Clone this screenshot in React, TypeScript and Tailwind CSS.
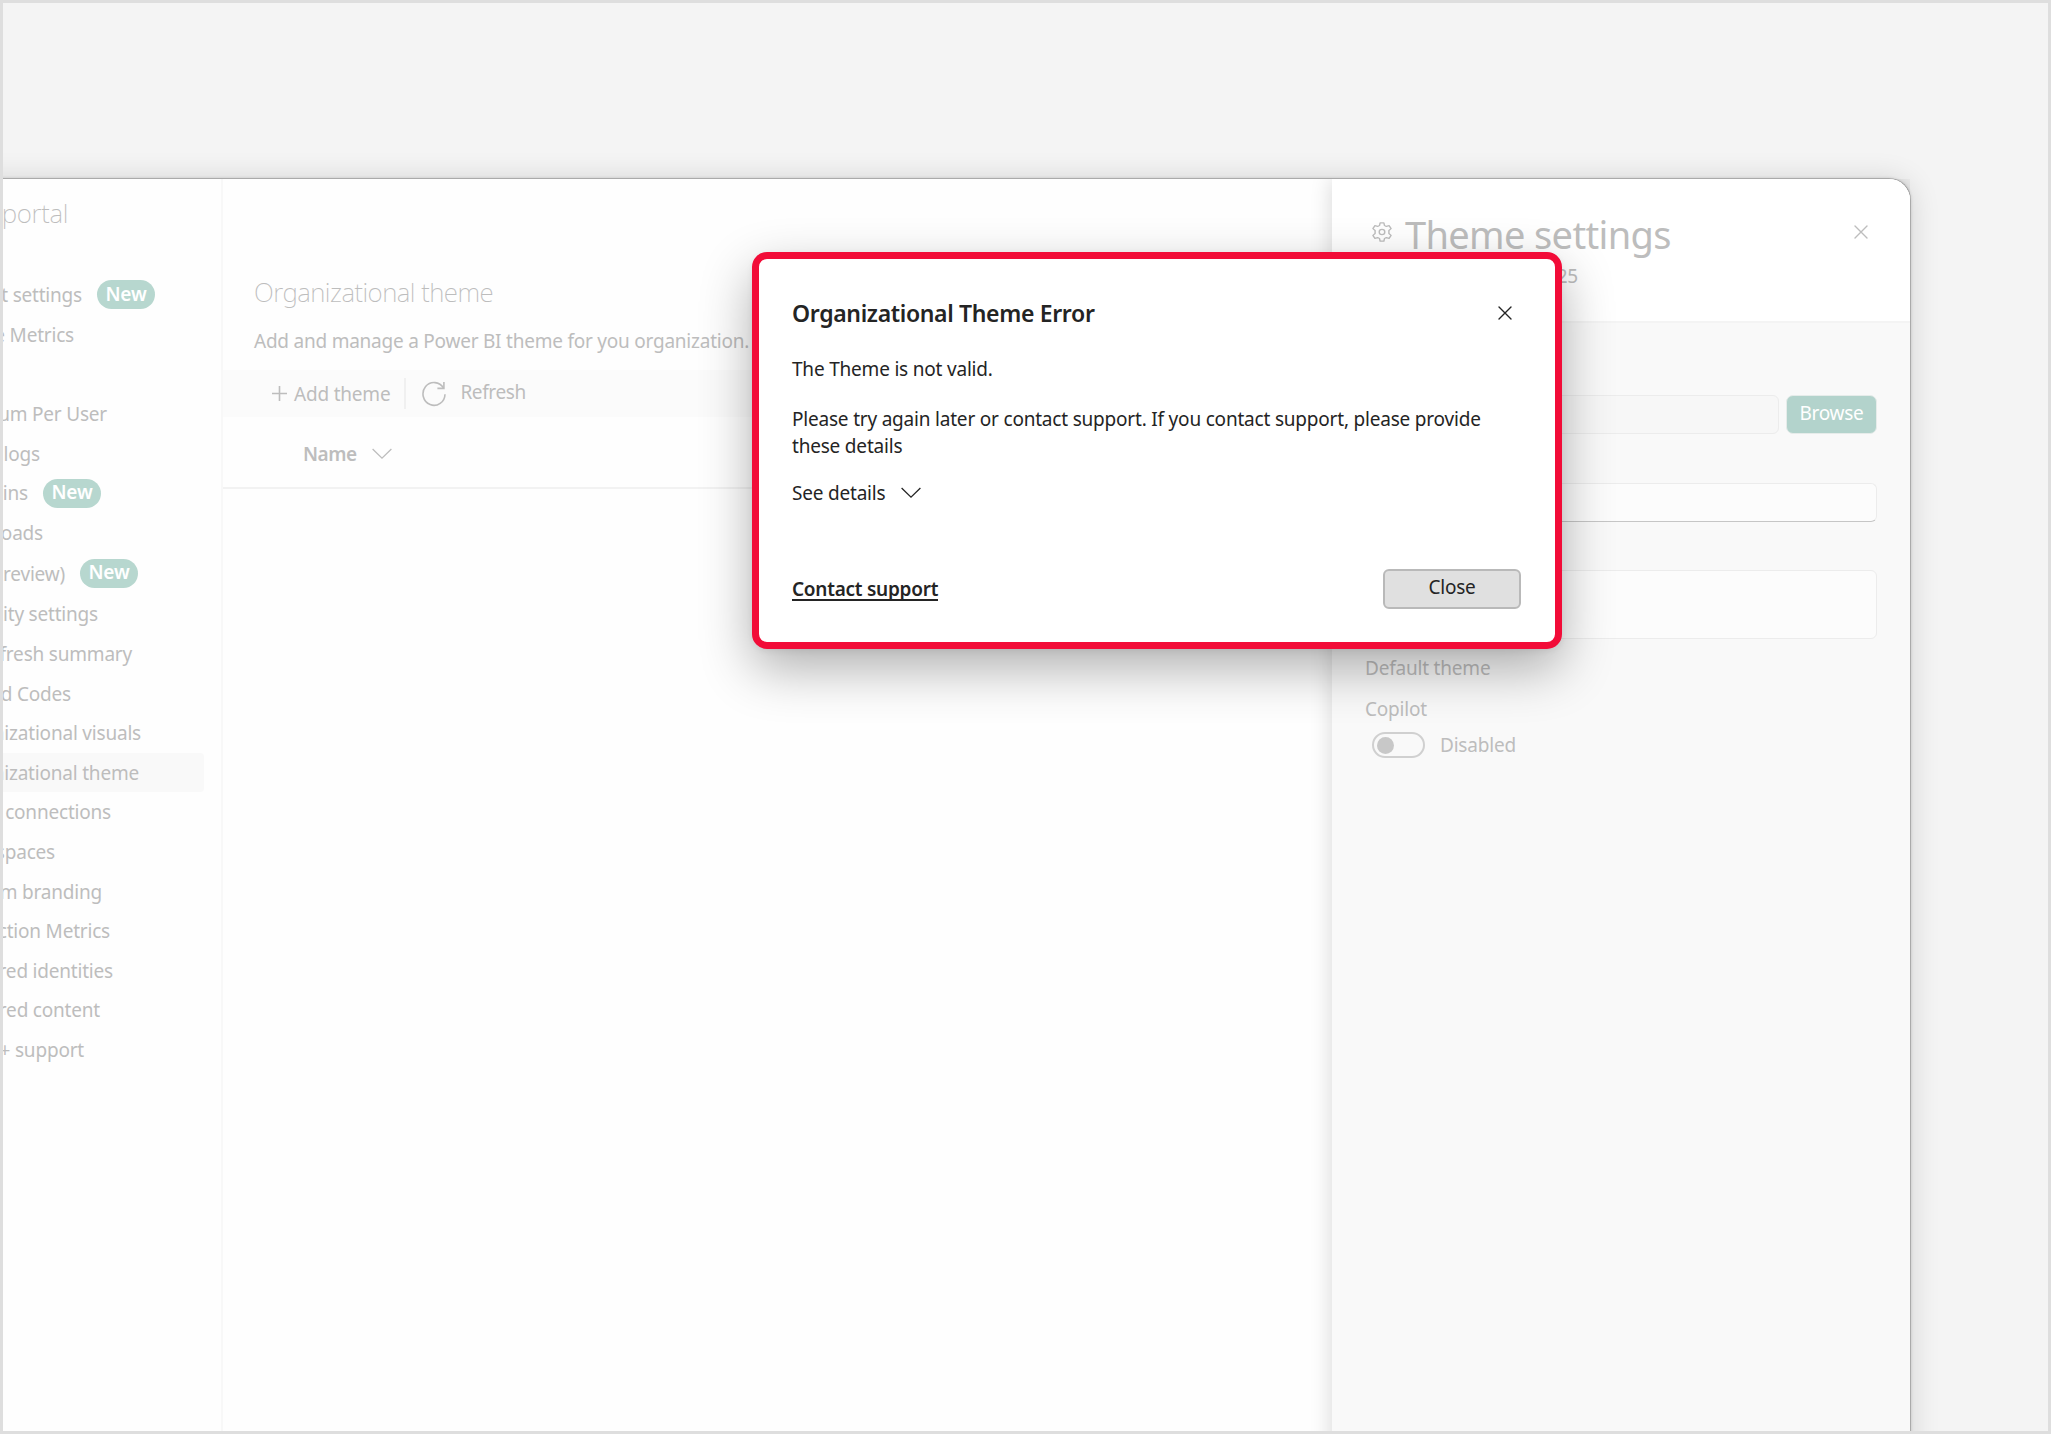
import type { ReactNode } from "react";

type NavItem = {
  label: string;
  end: number;
  isNew?: boolean;
  active?: boolean;
};

const topItems: NavItem[] = [
  { label: "t settings", end: 79, isNew: true },
  { label: "e Metrics", end: 71 },
  { label: "", end: 0 },
  { label: "um Per User", end: 104 },
  { label: "logs", end: 37 },
  { label: "ins", end: 25, isNew: true },
];

const middleItems: NavItem[] = [
  { label: "oads", end: 40 },
  { label: "review)", end: 62, isNew: true },
  { label: "ity settings", end: 95 },
];

const bottomItems: NavItem[] = [
  { label: "fresh summary", end: 129 },
  { label: "d Codes", end: 68 },
  { label: "nizational visuals", end: 138 },
  { label: "nizational theme", end: 136, active: true },
  { label: "connections", end: 108 },
  { label: "spaces", end: 52 },
  { label: "m branding", end: 99 },
  { label: "ction Metrics", end: 107 },
  { label: "red identities", end: 110 },
  { label: "red content", end: 97 },
  { label: "+ support", end: 81 },
];

function NewBadge() {
  return (
    <span className="ml-[15px] flex h-[29px] w-[58px] shrink-0 items-center justify-center rounded-full bg-[#b7d7cf] pb-[2px] text-[19px] font-semibold text-white">
      New
    </span>
  );
}

function NavRow({ item, className }: { item: NavItem; className: string }) {
  return (
    <div className={`flex items-center ${className} ${item.active ? "mr-[17px] rounded-r-sm bg-[#f9f9f9]" : ""}`}>
      <span className="flex shrink-0 justify-end pt-px whitespace-nowrap" style={{ width: item.end }}>
        {item.label}
      </span>
      {item.isNew && <NewBadge />}
    </div>
  );
}

function Chevron({ className }: { className?: string }) {
  return (
    <svg width="20" height="12" viewBox="0 0 20 12" fill="none" stroke="currentColor" strokeWidth="1.3" className={className}>
      <path d="M0.6 1 L10 10.2 L19.4 1" />
    </svg>
  );
}

function Cross({ className }: { className?: string }) {
  return (
    <svg width="14" height="14" viewBox="0 0 14 14" fill="none" stroke="currentColor" strokeWidth="1.4" strokeLinecap="round" className={className}>
      <path d="M1 1 L13 13 M13 1 L1 13" />
    </svg>
  );
}

function Gear({ className }: { className?: string }) {
  return (
    <svg width="20" height="20" viewBox="0 0 20 22" preserveAspectRatio="none" fill="none" stroke="currentColor" strokeWidth="1.4" strokeLinejoin="round" className={className}>
      <path d="M8.1 1 H11.9 L12.5 3.9 L14.3 4.9 L17.1 4 L19.1 7.3 L16.9 9.3 V12.7 L19.1 14.7 L17.1 18 L14.3 17.1 L12.5 18.1 L11.9 21 H8.1 L7.5 18.1 L5.7 17.1 L2.9 18 L0.9 14.7 L3.1 12.7 V9.3 L0.9 7.3 L2.9 4 L5.7 4.9 L7.5 3.9 Z" />
      <circle cx="10" cy="11" r="2.8" />
    </svg>
  );
}

function Sidebar() {
  return (
    <aside className="w-[220px] shrink-0 overflow-hidden border-r-2 border-[#f8f8f8] pt-[14px]">
      <div className="flex h-10 w-[65px] items-center justify-end text-[26px] font-extralight tracking-[-0.3px]">portal</div>
      <nav className="mt-[42px]">
        {topItems.map((item, i) => (
          <NavRow key={i} item={item} className="h-[39.65px]" />
        ))}
        {middleItems.map((item) => (
          <NavRow key={item.label} item={item} className="h-[40.4px]" />
        ))}
        {bottomItems.map((item) => (
          <NavRow key={item.label} item={item} className="h-[39.6px]" />
        ))}
      </nav>
    </aside>
  );
}

function ThemeList() {
  return (
    <main className="min-w-0 flex-1 pt-[93px]">
      <h1 className="pl-[31px] text-[26px] leading-10 font-extralight tracking-[-0.52px]">Organizational theme</h1>
      <p className="mt-[15px] pl-[31px] leading-7 tracking-[-0.23px] whitespace-nowrap">Add and manage a Power BI theme for you organization.</p>
      <div className="mt-[15px] flex h-[47px] items-center bg-[#fbfbfb] pl-[49px]">
        <svg width="15" height="15" viewBox="0 0 15 15" stroke="currentColor" strokeWidth="1.6">
          <path d="M7.5 0 V15 M0 7.5 H15" />
        </svg>
        <span className="ml-[7px] pt-[2px]">Add theme</span>
        <span className="ml-[14px] h-[31px] w-[2px] bg-[#f0f0f0]" />
        <svg width="24" height="26" viewBox="0 0 24 26" fill="none" stroke="currentColor" strokeWidth="1.6" className="ml-[16px]">
          <path d="M21.5 7.2 A11 11.4 0 1 0 23 13.2" />
          <path d="M21.9 1 V7.4 H15.4" />
        </svg>
        <span className="ml-[14px] pb-[2px] tracking-[-0.4px]">Refresh</span>
      </div>
      <div className="flex h-[72px] items-center border-b-2 border-[#f2f2f2] pt-[4px] pl-[80px]">
        <span className="font-semibold tracking-[-0.5px]">Name</span>
        <Chevron className="ml-[15px]" />
      </div>
    </main>
  );
}

function Field({ className, children }: { className: string; children?: ReactNode }) {
  return <div className={`rounded-md border ${className}`}>{children}</div>;
}

function SettingsPanel() {
  return (
    <section className="flex w-[578px] shrink-0 flex-col overflow-hidden rounded-tr-[21px] bg-[#f9f9f9]">
      <header className="h-[144px] border-b-2 border-[#f4f4f4] bg-white pt-[30px] pl-10">
        <div className="flex h-[50px] items-center">
          <Gear className="mb-1" />
          <h2 className="ml-[13px] text-[38px] leading-[50px] font-normal tracking-[-0.64px]">Theme settings</h2>
          <Cross className="mr-[42px] mb-[4px] ml-auto" />
        </div>
        <div className="mt-[3px] flex w-[206px] justify-end leading-7">25</div>
      </header>
      <div className="pt-[72px] pr-[33px] pl-[33px]">
        <div className="flex">
          <Field className="h-[39px] w-[414px] border-[#ececec] bg-[#f7f7f7]" />
          <button className="ml-[7px] h-[39px] w-[91px] rounded-[7px] border border-[#e6ecea] bg-[#b3d3cc] pb-[2px] tracking-[-0.25px] text-white">
            Browse
          </button>
        </div>
        <Field className="mt-[49px] h-[39px] border-[#ececec] border-b-[#c6c6c6] bg-[#fcfcfc]" />
        <Field className="mt-[48px] h-[69px] border-[#ececec] bg-[#fcfcfc]" />
        <div className="mt-[15px] leading-7">Default theme</div>
        <div className="mt-[13px] leading-7">Copilot</div>
        <div className="mt-[9px] flex h-[26px] items-center pl-[7px]">
          <span className="flex h-[26px] w-[53px] items-center rounded-full border-2 border-[#d0d0d0] pl-[3px]">
            <span className="size-[17px] rounded-full bg-[#c8c8c8]" />
          </span>
          <span className="ml-[15px]">Disabled</span>
        </div>
      </div>
    </section>
  );
}

function ErrorDialog() {
  return (
    <div
      role="dialog"
      className="absolute top-[249px] left-[749px] h-[397px] w-[810px] rounded-[15px] border-[7px] border-[#f20c38] bg-white pt-[38px] pr-[34px] pl-[33px] text-[#242424] shadow-[0_2px_6px_rgba(0,0,0,0.06),0_20px_52px_rgba(0,0,0,0.31)]"
    >
      <div className="flex h-8 items-center">
        <h2 className="text-[23px] leading-8 font-semibold tracking-[-0.34px]">Organizational Theme Error</h2>
        <Cross className="mr-[9px] mb-px ml-auto" />
      </div>
      <p className="mt-[27px] leading-[27px]">The Theme is not valid.</p>
      <p className="mt-[23px] leading-[27px] whitespace-nowrap">
        Please try again later or contact support. If you contact support, please provide
        <br />
        these details
      </p>
      <div className="mt-[20px] flex h-[27px] items-center">
        See details
        <Chevron className="mb-px ml-[16px]" />
      </div>
      <div className="mt-[62px] flex h-[40px] items-center justify-between">
        <a className="mt-[2px] border-b-2 border-[#242424] leading-[20px] font-semibold tracking-[-0.25px]">Contact support</a>
        <button className="h-[40px] w-[138px] rounded-md border-2 border-[#b9b9b9] bg-[#e0e0e0] pb-[3px]">Close</button>
      </div>
    </div>
  );
}

export default function App() {
  return (
    <div className="relative h-[1434px] w-[2051px] overflow-hidden border-[3px] border-[#dedede] bg-[#f4f4f4] pt-[175px] font-['Noto_Sans',sans-serif] text-[19px] tracking-[-0.2px] text-[#bdbdbd]">
      {/* the app window runs past the left and bottom edges of the frame */}
      <div className="-ml-[60px] flex h-[1400px] w-[1968px] rounded-tr-[22px] border-t border-r border-[#aaaaaa] bg-[#fefefe] pl-[60px] shadow-[0_0_3px_rgba(0,0,0,0.15),0_2px_30px_rgba(0,0,0,0.14)]">
        <Sidebar />
        <ThemeList />
        <div className="flex rounded-tr-[21px] shadow-[0_0_22px_rgba(0,0,0,0.16)] [clip-path:inset(0_0_0_-40px)]">
          <SettingsPanel />
        </div>
      </div>
      <ErrorDialog />
    </div>
  );
}
